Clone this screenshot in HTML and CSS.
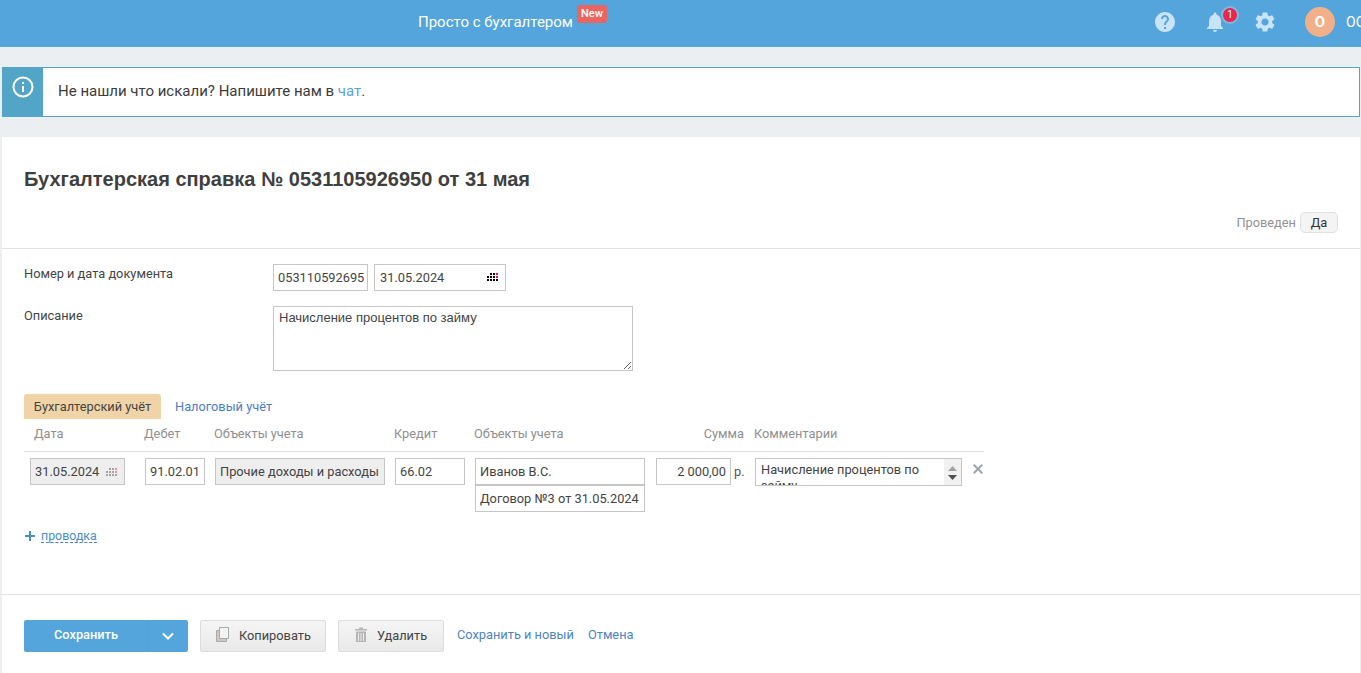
FILE: index.html
```html
<!DOCTYPE html>
<html lang="ru">
<head>
<meta charset="utf-8">
<title>Бухгалтерская справка</title>
<link rel="stylesheet" href="styles.css">
</head>
<body>
<header class="topbar">
  <div class="brand"><span class="brand-name">Просто с бухгалтером</span><span class="new-tag">New</span></div>
  <div class="top-actions">
    <svg class="top-icon" viewBox="0 0 24 24"><path d="M12 2C6.48 2 2 6.48 2 12s4.48 10 10 10 10-4.48 10-10S17.52 2 12 2zm1 17h-2v-2h2v2zm2.07-7.75l-.9.92C13.45 12.9 13 13.5 13 15h-2v-.5c0-1.1.45-2.1 1.17-2.83l1.24-1.26c.37-.36.59-.86.59-1.41 0-1.1-.9-2-2-2s-2 .9-2 2H8c0-2.21 1.79-4 4-4s4 1.79 4 4c0 .88-.36 1.68-.93 2.25z"/></svg>
    <div class="bell-wrap">
      <svg class="top-icon" viewBox="0 0 24 24"><path d="M12 22c1.1 0 2-.9 2-2h-4c0 1.1.89 2 2 2zm6-6v-5c0-3.07-1.64-5.64-4.5-6.32V4c0-.83-.67-1.5-1.5-1.5s-1.5.67-1.5 1.5v.68C7.63 5.36 6 7.92 6 11v5l-2 2v1h16v-1l-2-2z"/></svg>
      <span class="badge">1</span>
    </div>
    <svg class="top-icon" viewBox="0 0 24 24"><path d="M19.14 12.94c.04-.3.06-.61.06-.94 0-.32-.02-.64-.07-.94l2.03-1.58c.18-.14.23-.41.12-.61l-1.92-3.32c-.12-.22-.37-.29-.59-.22l-2.39.96c-.5-.38-1.03-.7-1.62-.94l-.36-2.54c-.04-.24-.24-.41-.48-.41h-3.84c-.24 0-.43.17-.47.41l-.36 2.54c-.59.24-1.13.57-1.62.94l-2.39-.96c-.22-.08-.47 0-.59.22L2.74 8.87c-.12.21-.08.47.12.61l2.03 1.58c-.05.3-.09.63-.09.94s.02.64.07.94l-2.03 1.58c-.18.14-.23.41-.12.61l1.92 3.32c.12.22.37.29.59.22l2.39-.96c.5.38 1.03.7 1.62.94l.36 2.54c.05.24.24.41.48.41h3.84c.24 0 .44-.17.47-.41l.36-2.54c.59-.24 1.13-.56 1.62-.94l2.39.96c.22.08.47 0 .59-.22l1.92-3.32c.12-.22.07-.47-.12-.61l-2.01-1.58zM12 15.6c-1.98 0-3.6-1.62-3.6-3.6s1.62-3.6 3.6-3.6 3.6 1.62 3.6 3.6-1.62 3.6-3.6 3.6z"/></svg>
    <div class="user"><span class="avatar">О</span><span class="user-name">ООО</span></div>
  </div>
</header>

<section class="notice">
  <div class="notice-icon">
    <svg viewBox="0 0 24 24" class="info"><circle cx="12" cy="12" r="9.5"/><path d="M12 11v6M12 7v2"/></svg>
  </div>
  <p class="notice-text">Не нашли что искали? Напишите нам в <a class="link-light" href="#">чат</a>.</p>
</section>

<main class="panel">
  <h1 class="doc-title">Бухгалтерская справка № 0531105926950 от 31 мая</h1>
  <div class="status-row"><span class="status-label">Проведен</span><span class="status-pill">Да</span></div>

  <div class="form">
    <div class="form-row">
      <label class="form-label">Номер и дата документа</label>
      <div class="field field-num">053110592695</div>
      <div class="field field-date"><span>31.05.2024</span>
        <svg class="cal" viewBox="0 0 11 8" shape-rendering="crispEdges">
          <path class="cal-dots" d="M3 0h2v2H3zM6 0h2v2H6zM0 3h2v2H0zM3 3h2v2H3zM6 3h2v2H6zM0 6h2v2H0zM3 6h2v2H3zM6 6h2v2H6zM9 6h2v2H9z"/>
          <path class="cal-red" d="M9 0h2v2H9zM9 3h2v2H9z"/>
        </svg>
      </div>
    </div>
    <div class="form-row row-desc">
      <label class="form-label">Описание</label>
      <textarea class="desc-area">Начисление процентов по займу</textarea>
    </div>
  </div>

  <nav class="tabs">
    <span class="tab tab-active">Бухгалтерский учёт</span>
    <a class="tab tab-link" href="#">Налоговый учёт</a>
  </nav>

  <div class="entries">
    <div class="entry-grid entry-head">
      <span class="h-date">Дата</span>
      <span>Дебет</span>
      <span>Объекты учета</span>
      <span>Кредит</span>
      <span>Объекты учета</span>
      <span class="h-sum">Сумма</span>
      <span>Комментарии</span>
    </div>
    <div class="entry-grid entry-row">
      <div class="field field-gray cell-date"><span>31.05.2024</span>
        <svg class="cal-small" viewBox="0 0 11 8" shape-rendering="crispEdges">
          <path class="cal-dots-gray" d="M3 0h2v2H3zM6 0h2v2H6zM0 3h2v2H0zM3 3h2v2H3zM6 3h2v2H6zM0 6h2v2H0zM3 6h2v2H3zM6 6h2v2H6zM9 6h2v2H9z"/>
          <path class="cal-pink" d="M9 0h2v2H9zM9 3h2v2H9z"/>
        </svg>
      </div>
      <div class="field">91.02.01</div>
      <div class="field field-gray">Прочие доходы и расходы</div>
      <div class="field">66.02</div>
      <div class="stack">
        <div class="field">Иванов В.С.</div>
        <div class="field">Договор №3 от 31.05.2024</div>
      </div>
      <div class="sum-cell"><div class="field cell-sum">2 000,00</div><span class="rub">р.</span></div>
      <div class="comment-wrap">
        <textarea class="comment-area">Начисление процентов по займу</textarea>
        <div class="spin">
          <svg viewBox="0 0 9 5" class="spin-up"><path d="M0 5L4.500 0 9 5z"/></svg>
          <svg viewBox="0 0 9 5" class="spin-down"><path d="M0 0l4.500 5L9 0z"/></svg>
        </div>
      </div>
      <svg class="remove" viewBox="0 0 10 10"><path d="M.7.7l8.600 8.600M9.300.7L.7 9.300"/></svg>
    </div>
  </div>

  <div class="add-line">
    <svg class="plus" viewBox="0 0 10 10"><path d="M5 0v10M0 5h10"/></svg>
    <a class="add-link" href="#">проводка</a>
  </div>

  <footer class="actions">
    <div class="save-btn"><span class="save-main">Сохранить</span><span class="save-arrow"><svg viewBox="0 0 12 8"><path d="M1 1.500l5 5 5-5"/></svg></span></div>
    <button class="btn btn-copy" type="button">
      <svg class="btn-icon" viewBox="0 0 14 15"><path class="ic-back" d="M.5 3.500h3v8h7v3H.5z"/><path class="ic-front" d="M3.500.5h9v11h-9z"/></svg>
      Копировать
    </button>
    <button class="btn btn-del" type="button">
      <svg class="btn-icon" viewBox="0 0 14 15"><path class="ic-trash" d="M1 2h12v1.500H1zM5 .5h4V2H5zM2 4.500h10V15H2z"/><path class="ic-slots" d="M4.500 6v8M7 6v8M9.500 6v8"/></svg>
      Удалить
    </button>
    <a class="foot-link" href="#">Сохранить и новый</a>
    <a class="foot-link" href="#">Отмена</a>
  </footer>
</main>
</body>
</html>
```
FILE: styles.css
```css
* { box-sizing: border-box; }
html, body { height: 100%; }
body {
  margin: 0;
  width: 1361px;
  height: 673px;
  overflow: hidden;
  background: #ebeff2;
  color: #3f3f3f;
  font: 12.800px/16px Roboto, "Liberation Sans", sans-serif;
}
a { text-decoration: none; }

.topbar {
  height: 47px;
  background: #53a5dc;
  display: flex;
  color: #fff;
  position: relative;
}
.brand { margin-left: 418px; display: flex; width: 737px; flex: none; }
.brand-name { font-size: 15px; line-height: 44px; }
.new-tag {
  margin: 5px 0 0 4px;
  width: 30px;
  height: 18px;
  background: #ea6560;
  border-radius: 3px;
  font-size: 11px;
  font-weight: 500;
  line-height: 17px;
  text-align: center;
}
.top-actions { display: flex; align-items: flex-start; }
.top-icon { width: 24px; height: 24px; fill: #c9e3f7; margin-top: 10px; display: block; }
.top-actions > .top-icon:first-child { margin-left: -2px; }
.bell-wrap { position: relative; margin-left: 26px; }
.badge {
  position: absolute;
  left: 18px;
  top: 6px;
  width: 18px;
  height: 18px;
  border-radius: 50%;
  background: #e8264e;
  border: 2px solid #7fb8e0;
  font-size: 10px;
  line-height: 14px;
  text-align: center;
  color: #fff;
}
.bell-wrap + .top-icon { margin-left: 26px; }
.user { display: flex; margin-left: 28px; margin-top: 7px; }
.avatar {
  width: 30px;
  height: 30px;
  border-radius: 50%;
  background: #f2b08a;
  color: #fff;
  font-size: 15px;
  font-weight: 700;
  line-height: 30px;
  text-align: center;
}
.user-name { margin-left: 11px; font-size: 14px; line-height: 30px; white-space: nowrap; }

.notice {
  margin: 20px 1px 0 2px;
  height: 50px;
  background: #fff;
  border: 1px solid #52a5c6;
  border-left: 0;
  display: flex;
}
.notice-icon { width: 41px; margin-top: -1px; margin-bottom: -1px; background: #52a5c6; display: flex; justify-content: center; padding-top: 8px; }
.info { width: 24px; height: 24px; fill: none; stroke: #fff; stroke-width: 2; }
.notice-text { margin: 0 0 0 15px; font-size: 15px; line-height: 46px; color: #3c3c3c; }
.link-light { color: #58a3dd; }

.panel {
  margin: 20px 1px 0 2px;
  height: 536px;
  background: #fff;
  position: relative;
}
.doc-title {
  margin: 0;
  padding: 30px 0 0 22px;
  font: 700 20px/24px "Liberation Sans", Arial, sans-serif;
  color: #3f3f3f;
}
.status-row {
  display: flex;
  justify-content: flex-end;
  align-items: center;
  padding: 20px 22px 14px 0;
  height: 58px;
  border-bottom: 1px solid #e2e2e2;
}
.status-label { color: #929292; margin-right: 4px; }
.status-pill {
  width: 38px;
  height: 21px;
  border: 1px solid #e0e0e0;
  border-radius: 5px;
  background: #f4f4f4;
  text-align: center;
  line-height: 19px;
  color: #333;
}

.form { padding: 15px 0 0 22px; }
.form-row { display: flex; align-items: flex-start; }
.form-label { width: 249px; flex: none; color: #444; line-height: 20px; }
.row-desc { margin-top: 15px; }

.field {
  height: 27px;
  border: 1px solid #c6c6c6;
  background: #fff;
  padding: 0 4px;
  line-height: 25px;
  white-space: nowrap;
  overflow: hidden;
  color: #444;
}
.field-num { width: 95px; }
.field-date { width: 132px; margin-left: 6px; display: flex; justify-content: space-between; align-items: center; padding: 0 7px 0 5px; }
.cal { width: 11px; height: 8px; display: block; margin-top: -1px; }
.cal-dots { fill: #000; }
.cal-red { fill: #e01b3c; }
.cal-small { width: 11px; height: 8px; display: block; margin-right: 3px; }
.cal-dots-gray { fill: #a3a3a3; }
.cal-pink { fill: #f08ea0; }
.desc-area {
  width: 360px;
  height: 65px;
  border: 1px solid #c6c6c6;
  padding: 3px 5px;
  font: 13px/16px "Liberation Sans", Arial, sans-serif;
  color: #444;
  display: block;
  outline: 0;
}

.tabs { margin: 23px 0 0 22px; display: flex; align-items: center; height: 25px; }
.tab { line-height: 25px; }
.tab-active {
  width: 137px;
  text-align: center;
  background: #f0d4a8;
  border-radius: 3px 3px 0 0;
  color: #444;
}
.tab-link { margin-left: 14px; color: #4c7dc6; }

.entries { margin-left: 22px; width: 960px; }
.entry-grid {
  display: grid;
  grid-template-columns: 105px 60px 170px 70px 170px 90px 207px 12px;
  column-gap: 10px;
}
.entry-head {
  height: 33px;
  padding: 6px 0 0 5px;
  border-bottom: 1px solid #dfdfdf;
  color: #8f8f8f;
  line-height: 18px;
  white-space: nowrap;
}
.h-date { padding-left: 5px; }
.h-sum { text-align: right; }
.entry-row { padding: 6px 0 0 6px; height: 74px; align-items: start; }
.field-gray { background: #eeeeee; }
.cell-date { width: 95px; display: flex; align-items: center; justify-content: space-between; }
.stack { display: flex; flex-direction: column; }
.sum-cell { display: flex; align-items: center; margin-left: 1px; }
.cell-sum { width: 75px; text-align: right; flex: none; }
.rub { margin-left: 3px; color: #555; }
.comment-wrap { position: relative; width: 207px; height: 28px; }
.comment-area {
  width: 207px;
  height: 28px;
  border: 1px solid #c6c6c6;
  padding: 3px 20px 0 5px;
  font: 12.800px/16px Roboto, "Liberation Sans", sans-serif;
  color: #444;
  overflow: hidden;
  resize: none;
  outline: 0;
  display: block;
}
.spin {
  position: absolute;
  top: 1px; right: 1px; bottom: 1px;
  width: 17px;
  background: #f1f1f1;
  display: flex;
  flex-direction: column;
  align-items: center;
  justify-content: space-between;
  padding: 7px 0 5px;
}
.spin svg { width: 9px; height: 5px; display: block; }
.spin-up { fill: #a3a3a3; }
.spin-down { fill: #505050; }
.remove { width: 10px; height: 10px; margin: 6px 0 0 1px; fill: none; stroke: #9aa5ae; stroke-width: 2; }

.add-line { display: flex; align-items: center; margin: 0 0 0 23px; height: 20px; }
.plus { width: 10px; height: 10px; fill: none; stroke: #4a8fc9; stroke-width: 2; }
.add-link { margin-left: 6px; color: #4a8fc9; border-bottom: 1px dashed #4a7fc9; line-height: 13px; font-size: 12.400px; }

.actions {
  position: absolute;
  left: 0; right: 0; bottom: 0;
  height: 79px;
  border-top: 1px solid #e2e2e2;
  display: flex;
  align-items: flex-start;
  padding: 25px 0 0 22px;
}
.save-btn { width: 164px; height: 32px; display: flex; background: #53a5dc; border-radius: 2px; color: #fff; }
.save-main { width: 124px; text-align: center; font-weight: 500; line-height: 30px; }
.save-arrow { width: 40px; border-left: 1px solid #50a2d9; display: flex; justify-content: center; align-items: center; padding-right: 2px; }
.save-arrow svg { width: 12px; height: 8px; fill: none; stroke: #fff; stroke-width: 2; }
.btn {
  height: 32px;
  border: 1px solid #dcdcdc;
  border-radius: 2px;
  background: linear-gradient(#f5f5f5, #e9e9e9);
  color: #444;
  font: 12.800px/16px Roboto, "Liberation Sans", sans-serif;
  display: flex;
  align-items: center;
  padding: 0 0 0 15px;
  margin-left: 12px;
}
.btn-copy { width: 126px; }
.btn-del { width: 106px; }
.btn-icon { width: 14px; height: 15px; margin: -4px 9px 0 0; flex: none; }
.ic-back { fill: #cfc8c2; stroke: #a9a9a9; }
.ic-front { fill: #f3f3f3; stroke: #a9a9a9; }
.ic-trash { fill: #b5b5b5; }
.ic-slots { stroke: #eeeeee; fill: none; }
.foot-link { color: #4c84c4; line-height: 30px; margin-left: 14px; }
.btn-del + .foot-link { margin-left: 13px; }
```
